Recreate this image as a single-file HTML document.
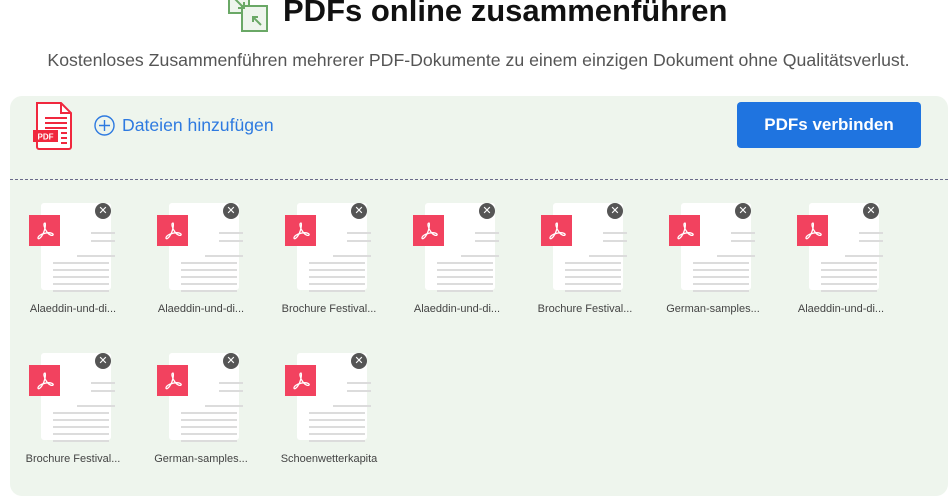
<!DOCTYPE html>
<html><head><meta charset="utf-8"><style>
*{margin:0;padding:0;box-sizing:border-box}
body{width:951px;height:475px;overflow:hidden;background:#fff;font-family:"Liberation Sans",sans-serif;position:relative}
.abs{position:absolute}
.title{left:283px;top:-7px;font-size:31px;font-weight:bold;color:#111;white-space:nowrap}
.sub{left:0;width:957px;text-align:center;top:50px;font-size:17.7px;color:#555;white-space:nowrap}
.box{left:10px;top:96px;width:938px;height:400px;background:#eef5ed;border-radius:12px}
.dash{left:10px;top:179px;width:938px;border-top:1px dashed #6a6a8a}
.btn{left:737px;top:102px;width:184px;height:46px;background:#1f74e0;border-radius:4px;color:#fff;font-weight:bold;font-size:17px;text-align:center;line-height:46px}
.add{left:94px;top:115px;font-size:17.6px;color:#2e7ae0;white-space:nowrap}
.card{width:128px;height:150px}
.doc{position:absolute;left:24px;top:0;width:70px;height:87px;background:#fff;border-radius:3px}
.ln{position:absolute;height:2px;background:#dcdcdc}
.red{position:absolute;left:12px;top:12px;width:31px;height:31px;background:#f2425f}
.x{position:absolute;left:78px;top:0;width:16px;height:16px;border-radius:50%;background:#555;color:#fff;font-size:11px;line-height:16px;text-align:center}
.lb{position:absolute;left:2px;width:108px;top:100px;font-size:11px;color:#444;text-align:center;white-space:nowrap;overflow:hidden}
</style></head><body>
<svg class="abs" style="left:228px;top:-8px" width="42" height="42" viewBox="0 0 42 42"><rect x="1" y="1" width="20" height="20" fill="#eef5ed" stroke="#6aa866" stroke-width="2"/><rect x="14" y="14" width="25" height="25" fill="#eef5ed" stroke="#6aa866" stroke-width="2"/><path d="M7 7l9 9M16 10v6h-6M33 33l-8-8M25 30v-5h5" stroke="#6aa866" stroke-width="2" fill="none"/></svg>
<div class="abs title">PDFs online zusammenführen</div>
<div class="abs sub">Kostenloses Zusammenführen mehrerer PDF-Dokumente zu einem einzigen Dokument ohne Qualitätsverlust.</div>
<div class="abs box"></div>
<div class="abs dash"></div>
<svg class="abs" style="left:33px;top:102px" width="42" height="48" viewBox="0 0 42 48"><path d="M4 1h24l10 10v34a2 2 0 0 1-2 2H6a2 2 0 0 1-2-2z" fill="#fff" stroke="#f0283e" stroke-width="2"/><path d="M28 1v10h10" fill="none" stroke="#f0283e" stroke-width="2"/><path d="M12 16h22M12 21h22M12 26h22M28 31h6M28 36h6M28 41h6" stroke="#f0283e" stroke-width="2"/><rect x="0" y="28" width="25" height="12" fill="#f0283e"/><text x="12.5" y="37.5" font-size="8" font-weight="bold" fill="#fff" text-anchor="middle" font-family="Liberation Sans">PDF</text></svg>
<svg class="abs" style="left:94px;top:115px" width="21" height="21" viewBox="0 0 21 21"><circle cx="10.5" cy="10.5" r="9.5" fill="none" stroke="#2e7ae0" stroke-width="1.4"/><path d="M10.5 5v11M5 10.5h11" stroke="#2e7ae0" stroke-width="1.4"/></svg>
<div class="abs add" style="left:122px">Dateien hinzufügen</div>
<div class="abs btn">PDFs verbinden</div>
<div id="cards"></div>
<script>
var names=[["Alaeddin-und-di...","Alaeddin-und-di...","Brochure Festival...","Alaeddin-und-di...","Brochure Festival...","German-samples...","Alaeddin-und-di..."],["Brochure Festival...","German-samples...","Schoenwetterkapita"]];
var h="";
names.forEach(function(r,ri){r.forEach(function(n,ci){
var L=17+ci*128,T=203+ri*150;
h+='<div class="abs card" style="left:'+L+'px;top:'+T+'px"><div class="doc"></div>';
h+='<div class="ln" style="left:74px;top:29px;width:24px"></div><div class="ln" style="left:74px;top:37px;width:24px"></div><div class="ln" style="left:60px;top:52px;width:38px"></div>';
for(var i=0;i<5;i++)h+='<div class="ln" style="left:36px;top:'+(59+i*7)+'px;width:56px"></div>';
h+='<div class="red"><svg width="31" height="31" viewBox="0 0 31 31"><path d="M16 8c-2 0-1 5 2 9 2 3 5 4 6 3s-2-3-7-2-8 3-8 5 3 0 5-4 3-10 2-11z" fill="none" stroke="#fff" stroke-width="1.3"/></svg></div>';
h+='<div class="x">✕</div><div class="lb">'+n+'</div></div>';
})});
document.getElementById("cards").innerHTML=h;
</script>
</body></html>
